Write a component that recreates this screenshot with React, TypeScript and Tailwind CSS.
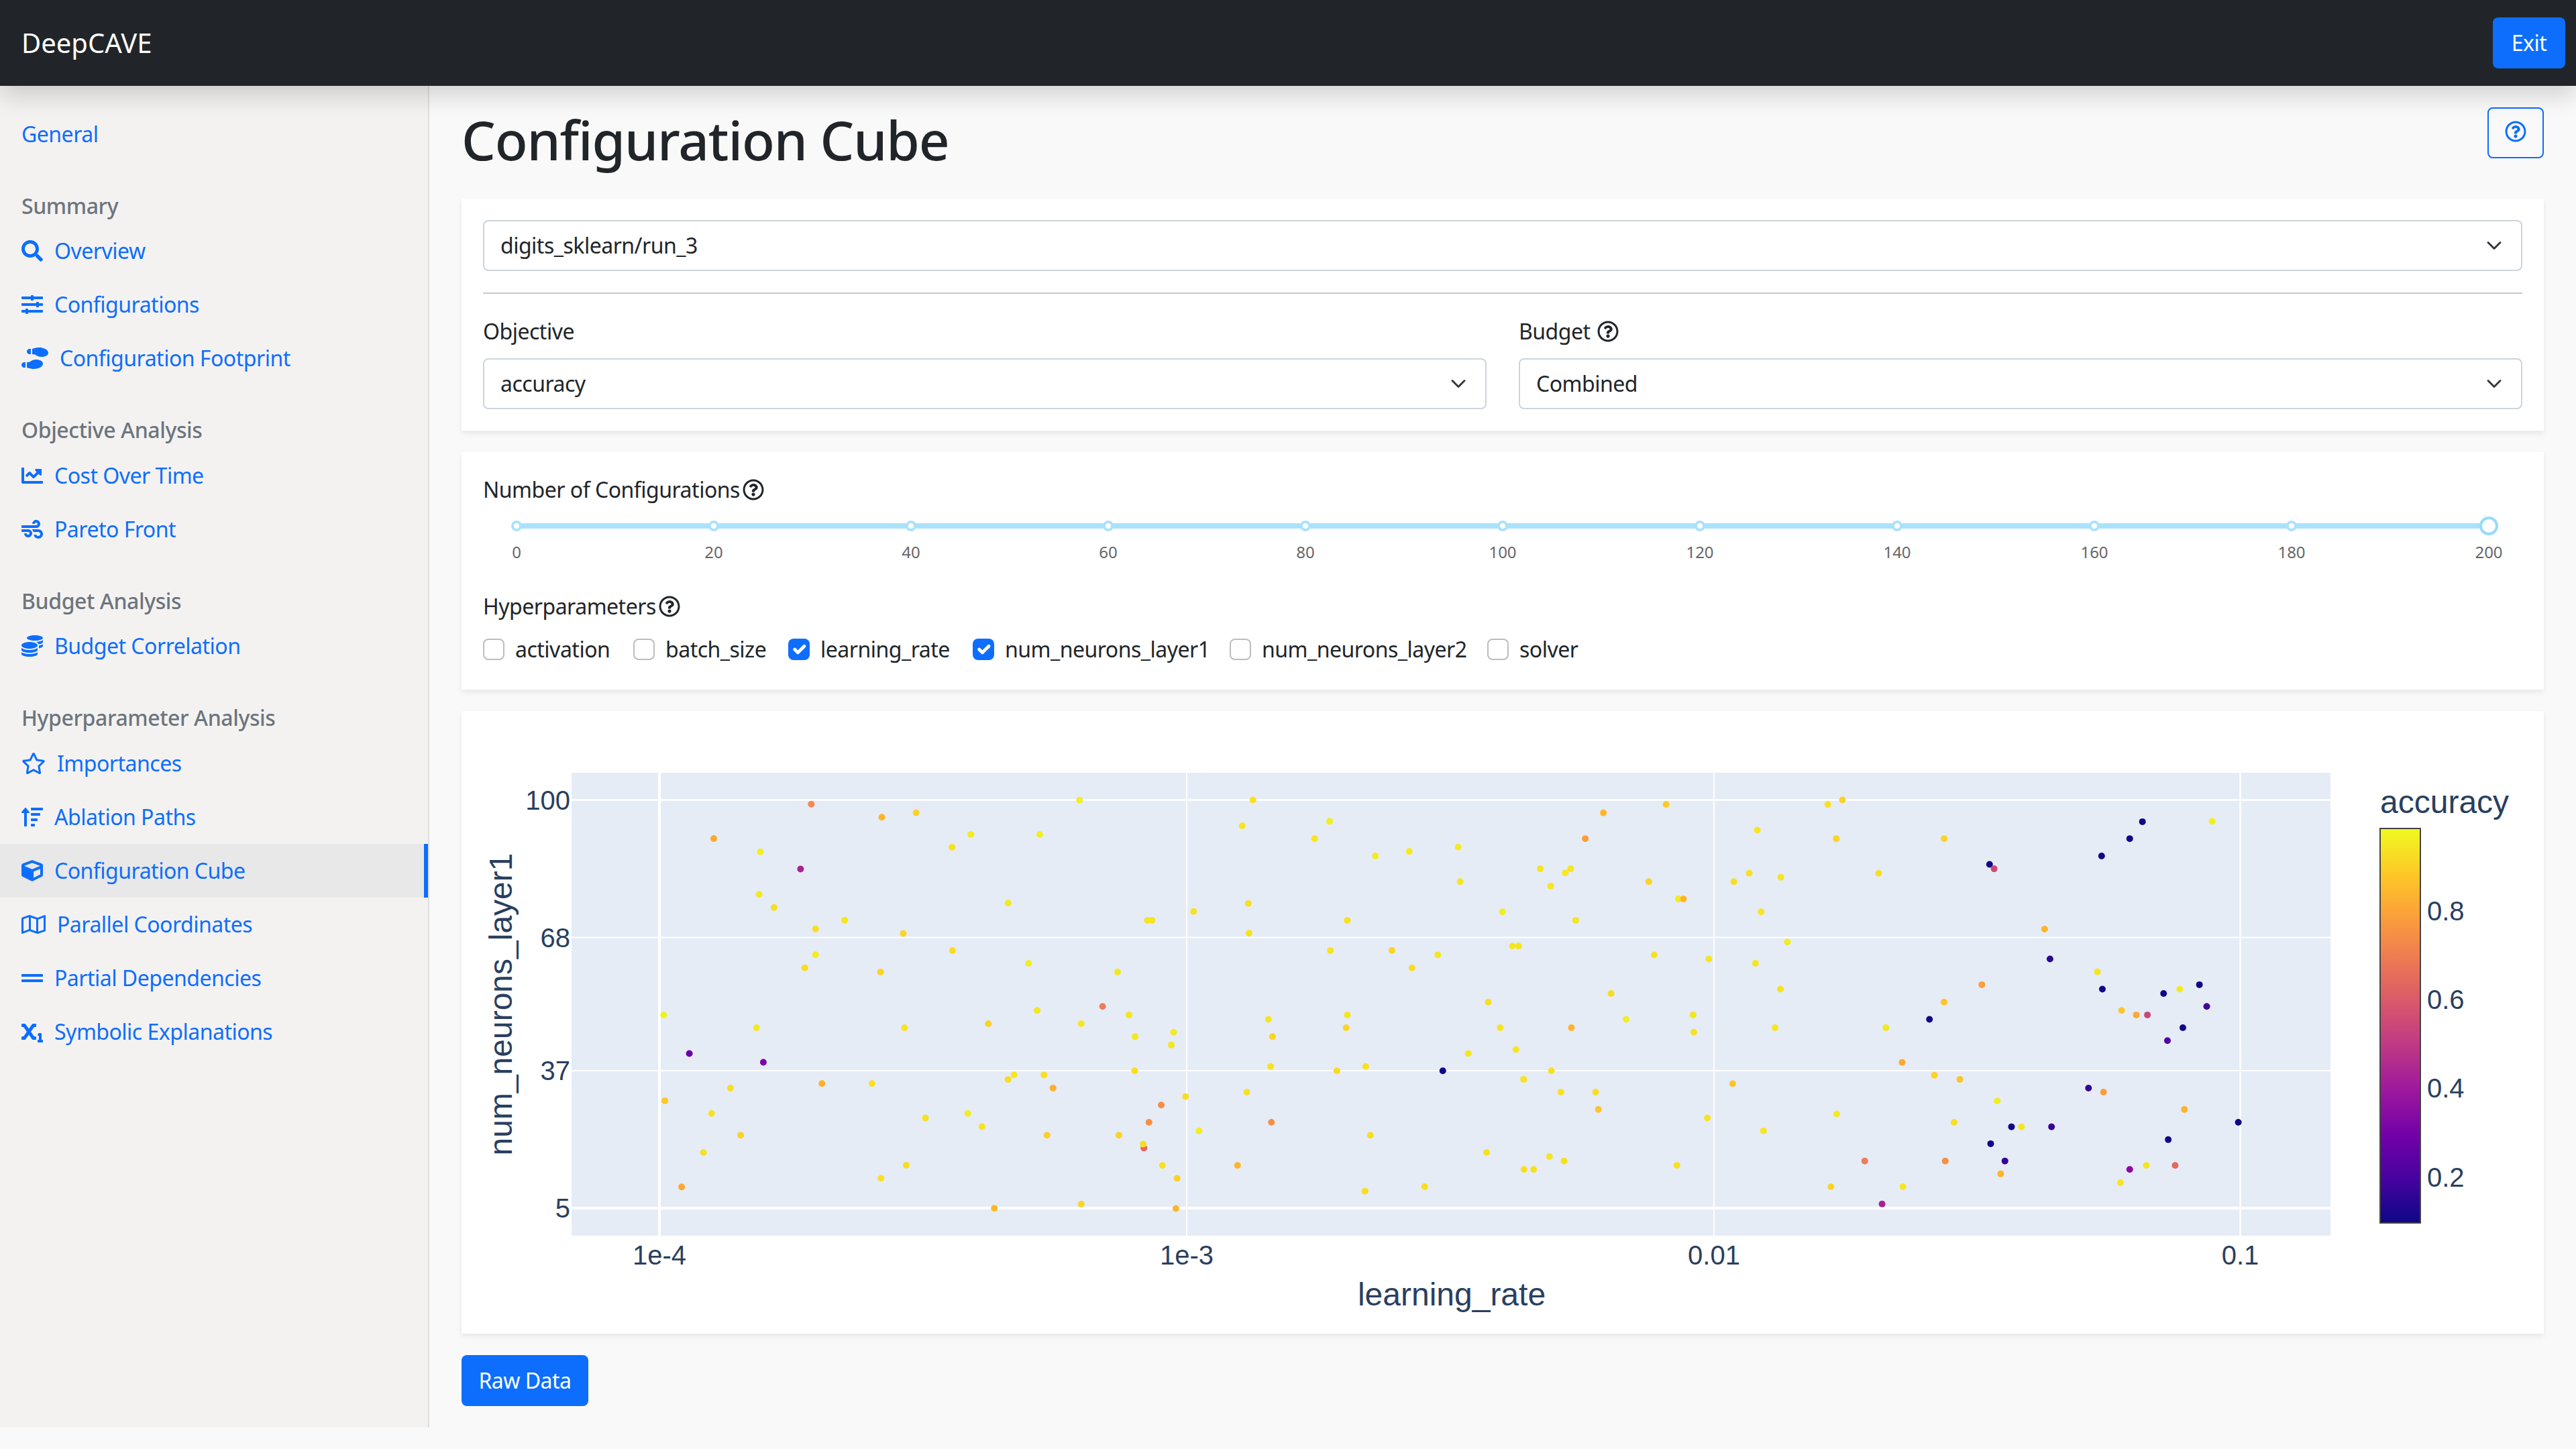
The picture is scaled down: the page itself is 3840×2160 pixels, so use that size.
import React from "react";
import {
  FaSearch, FaSlidersH, FaShoePrints, FaChartLine, FaWind, FaCoins, FaRegStar,
  FaSortAmountUp, FaCube, FaRegMap, FaGripLines, FaSubscript, FaRegQuestionCircle,
} from "react-icons/fa";

type IconT = React.ComponentType<{ className?: string }>;
type Item = { label: string; icon?: IconT; iconClass?: string };
const sections: { title?: string; items: (Item & { active?: boolean })[] }[] = [
  { items: [{ label: "General" }] },
  { title: "Summary", items: [
    { label: "Overview", icon: FaSearch, iconClass: "w-8" },
    { label: "Configurations", icon: FaSlidersH, iconClass: "w-8" },
    { label: "Configuration Footprint", icon: FaShoePrints, iconClass: "w-10" },
  ] },
  { title: "Objective Analysis", items: [
    { label: "Cost Over Time", icon: FaChartLine, iconClass: "w-8" },
    { label: "Pareto Front", icon: FaWind, iconClass: "w-8" },
  ] },
  { title: "Budget Analysis", items: [{ label: "Budget Correlation", icon: FaCoins, iconClass: "w-8" }] },
  { title: "Hyperparameter Analysis", items: [
    { label: "Importances", icon: FaRegStar, iconClass: "w-9" },
    { label: "Ablation Paths", icon: FaSortAmountUp, iconClass: "w-8" },
    { label: "Configuration Cube", icon: FaCube, iconClass: "w-8", active: true },
    { label: "Parallel Coordinates", icon: FaRegMap, iconClass: "w-9" },
    { label: "Partial Dependencies", icon: FaGripLines, iconClass: "w-8" },
    { label: "Symbolic Explanations", icon: FaSubscript, iconClass: "w-8" },
  ] },
];

type P = [number, number, string];
const z5: P[] = [
  [602,222,"#ffa92f"],[830,146,"#f58850"],[995,175,"#ffb428"],[1075,165,"#fcd225"],[1159,241,"#f7e220"],[1203,213,"#f5ea1f"],[1364,213,"#f2ee1f"],[1457,137,"#f2f01e"],[711,251,"#f0f01f"],[805,289,"#a8238f"],[708,345,"#f5e81f"],[743,374,"#f5e020"],[1290,364,"#f2ea1f"],[840,421,"#f9de20"],[908,402,"#f5e61f"],[1045,431,"#fad520"],[840,478,"#f0f01f"],[1160,469,"#f9dc20"],[815,507,"#f9dc20"],[1338,497,"#f2ee1f"],[992,516,"#fcd225"],[1546,516,"#f5e61f"],[1511,592,"#ee7c5a"],[1358,601,"#f5e61f"],[485,611,"#f0f21e"],[1244,630,"#fcd225"],[1461,630,"#f7e520"],[702,639,"#f2ea1f"],[1048,639,"#f7e520"],[545,696,"#6a00a8"],[718,715,"#7e03a8"],[1290,753,"#f9dc20"],[1304,743,"#f5e61f"],[1374,743,"#f9e020"],[1395,772,"#ffad2d"],[641,772,"#f9de20"],[855,762,"#ffaf2b"],[972,762,"#fce020"],[488,800,"#fdc927"],[597,828,"#f7e220"],[1097,838,"#f7e020"],[1196,828,"#f2ee1f"],[1229,857,"#f7e220"],[665,876,"#fcd225"],[1381,876,"#fdcf24"],[1549,876,"#fcd225"],[578,914,"#f9e020"],[527,990,"#ffa832"],[993,971,"#f9e020"],[1052,942,"#f9dc20"],[1258,1037,"#ffb726"],[1461,1028,"#fdd324"],
];
const z6: P[] = [
  [327,114,"#f9e020"],[299,184,"#f7e520"],[526,172,"#f0f01f"],[487,219,"#f7e520"],[645,266,"#f5ea1f"],[733,254,"#f5ea1f"],[860,242,"#f5ea1f"],[865,336,"#f7e520"],[1237,149,"#ffb726"],[1190,219,"#ff9e38"],[1400,126,"#fdc927"],[1073,301,"#f5e61f"],[1152,301,"#f7e520"],[1138,312,"#f5ea1f"],[1100,348,"#f7e520"],[1355,336,"#fcd225"],[1432,383,"#f5ea1f"],[1445,383,"#ffb726"],[173,417,"#f7e220"],[315,395,"#f9e020"],[53,441,"#f5e61f"],[65,441,"#f5e61f"],[572,441,"#f7e220"],[975,418,"#f2ee1f"],[1165,441,"#f5e61f"],[317,476,"#f7e220"],[528,523,"#f7e220"],[688,523,"#fad520"],[807,535,"#f5e61f"],[1001,511,"#f7e520"],[1017,511,"#f7e520"],[1369,535,"#f7e220"],[1511,546,"#f5e61f"],[740,570,"#f9dc20"],[1257,640,"#f9dc20"],[938,663,"#f9de20"],[1470,698,"#f5e61f"],[5,698,"#f5e61f"],[572,698,"#f7e520"],[367,710,"#f7e520"],[1296,710,"#f2ee1f"],[569,733,"#fdd324"],[969,733,"#f7e520"],[1154,733,"#ffb528"],[21,757,"#f5e61f"],[121,745,"#f5ea1f"],[378,757,"#fad520"],[1472,745,"#f7e220"],[115,780,"#f5e61f"],[1010,792,"#f7e520"],[886,803,"#f5e61f"],[373,838,"#f7e220"],[620,838,"#f7e220"],[20,850,"#f9de20"],[545,850,"#f9dc20"],[820,850,"#100788"],[1102,850,"#f7e220"],[1030,873,"#f9e020"],[311,908,"#f7e220"],[1127,908,"#f9e020"],[1217,908,"#f9de20"],[152,920,"#f9de20"],[1224,955,"#fdc527"],[89,943,"#f68f44"],[1507,978,"#f7e220"],[57,990,"#f68f44"],[375,990,"#f68f44"],[187,1013,"#f2ee1f"],[632,1025,"#f9de20"],[44,1060,"#e6685f"],[42,1049,"#f9de20"],[934,1072,"#f7e220"],[1097,1083,"#f5e61f"],[1135,1095,"#f9de20"],[1031,1118,"#f9de20"],[1056,1118,"#f9de20"],[92,1107,"#f9e020"],[287,1107,"#ffb528"],[1428,1107,"#f9e020"],[130,1142,"#fdcf24"],[618,1177,"#f9de20"],[773,1165,"#f9de20"],[127,1224,"#ffb528"],
];
const z7: P[] = [
  [252,126,"#f9e020"],[290,114,"#fcd225"],[69,196,"#f7e520"],[274,219,"#fcd225"],[554,219,"#fcd225"],[48,313,"#f9e020"],[8,336,"#f9de20"],[130,324,"#f7e520"],[384,313,"#f9de20"],[79,418,"#f5e61f"],[147,500,"#f5ea1f"],[64,558,"#f5e61f"],[129,628,"#f7e220"],[115,733,"#f5e61f"],[403,733,"#f5e61f"],[1250,172,"#f0f01f"],[1069,173,"#100788"],[1036,219,"#100788"],[963,266,"#100788"],[672,289,"#100788"],[684,301,"#cc4778"],[815,465,"#ffb528"],[829,546,"#2a0593"],[952,581,"#f5e61f"],[652,616,"#ff9e38"],[965,628,"#100788"],[1124,640,"#100788"],[1166,628,"#f5ea1f"],[1217,616,"#100788"],[554,663,"#fdc527"],[1015,686,"#fdc527"],[1053,698,"#ffa832"],[1082,698,"#cc4778"],[1236,675,"#41049d"],[516,710,"#100788"],[1174,733,"#100788"],[1134,768,"#5302a3"],[445,827,"#ffa832"],[529,862,"#fdd324"],[595,873,"#fdc527"],[5,885,"#fdc527"],[929,897,"#340597"],[968,908,"#ff9e38"],[692,932,"#f2ee1f"],[275,967,"#f5ea1f"],[1178,955,"#ffb528"],[580,990,"#f9e020"],[85,1013,"#f5e61f"],[729,1002,"#100788"],[755,1002,"#f5e61f"],[833,1002,"#340597"],[1318,990,"#100788"],[675,1048,"#100788"],[1136,1037,"#100788"],[348,1095,"#ee7c5a"],[557,1095,"#f68f44"],[712,1095,"#340597"],[1079,1107,"#f7e220"],[1036,1118,"#8b0aa5"],[1154,1107,"#e6685f"],[701,1130,"#ffb528"],[1012,1154,"#f5e61f"],[260,1165,"#fcd225"],[447,1165,"#f5e61f"],[393,1212,"#a8238f"],
];

const points: [number, number, string][] = [
  ...z5.map(([x, y, c]): [number, number, string] => [680 + x / 1.568, 1100 + y / 1.479, c]),
  ...z6.map(([x, y, c]): [number, number, string] => [1680 + x / 1.742, 1130 + y / 1.823, c]),
  ...z7.map(([x, y, c]): [number, number, string] => [2580 + x / 1.742, 1130 + y / 1.823, c]),
];

const hLines: [number, number, string][] = [[1192.5, 2.5, "100"], [1397.5, 2, "68"], [1596, 2, "37"], [1801, 4, "5"]];
const vLines: [number, number, string][] = [[983, 4, "1e-4"], [1769, 2, "1e-3"], [2555, 2, "0.01"], [3339.5, 2.5, "0.1"]];
const cbTicks: [number, string][] = [[1372, "0.8"], [1504, "0.6"], [1636, "0.4"], [1769, "0.2"]];

function Chart() {
  return (
    <svg viewBox="688 1060 3104 928" className="block h-full w-full" style={{ fontFamily: '"Liberation Sans", Arial, sans-serif', letterSpacing: 0 }}>
      <defs>
        <linearGradient id="plasma" x1="0" y1="1" x2="0" y2="0">
          {["#0d0887","#46039f","#7201a8","#9c179e","#bd3786","#d8576b","#ed7953","#fb9f3a","#fdca26","#f0f921"].map((c, i) => (
            <stop key={c} offset={i / 9} stopColor={c} />
          ))}
        </linearGradient>
      </defs>
      <rect x={852} y={1152} width={2622} height={690} fill="#e5ecf6" />
      {hLines.map(([y, w]) => <line key={y} x1={852} x2={3474} y1={y} y2={y} stroke="#fff" strokeWidth={w} />)}
      {vLines.map(([x, w]) => <line key={x} y1={1152} y2={1842} x1={x} x2={x} stroke="#fff" strokeWidth={w} />)}
      {points.map(([x, y, c], i) => <circle key={i} cx={x} cy={y} r={5} fill={c} />)}
      <g fill="#2a3f5f" fontSize={40}>
        {hLines.map(([y, , t]) => <text key={t} x={850} y={y + 14} textAnchor="end">{t}</text>)}
        {vLines.map(([x, , t]) => <text key={t} x={x} y={1885} textAnchor="middle">{t}</text>)}
        {cbTicks.map(([y, t]) => <text key={t} x={3618} y={y}>{t}</text>)}
      </g>
      <g fill="#2a3f5f" fontSize={48}>
        <text x={2164} y={1946} textAnchor="middle">learning_rate</text>
        <text transform="translate(763 1497) rotate(-90)" textAnchor="middle">num_neurons_layer1</text>
        <text x={3548} y={1212}>accuracy</text>
      </g>
      <rect x={3548} y={1235} width={60} height={588} fill="url(#plasma)" stroke="#444" strokeWidth={2} />
    </svg>
  );
}

function Select({ value }: { value: string }) {
  return (
    <div className="flex h-[76px] items-center justify-between rounded-lg border-2 border-[#ced4da] bg-white pl-6 pr-[28px]">
      <span>{value}</span>
      <svg viewBox="0 0 16 16" className="h-6 w-6" fill="none" stroke="#343a40" strokeWidth={2} strokeLinecap="round" strokeLinejoin="round">
        <path d="M2 5l6 6 6-6" />
      </svg>
    </div>
  );
}

function Check({ label, on, className }: { label: string; on?: boolean; className: string }) {
  return (
    <label className={"flex items-center gap-4 " + className}>
      <span className={on ? "flex h-8 w-8 items-center justify-center rounded-lg bg-[#0d6efd]" : "h-8 w-8 rounded-lg border-2 border-[#bdbdbd] bg-white"}>
        {on && (
          <svg viewBox="0 0 20 20" className="h-8 w-8" fill="none" stroke="#fff" strokeWidth={3} strokeLinecap="round" strokeLinejoin="round">
            <path d="M6 10l3 3l6-6" />
          </svg>
        )}
      </span>
      <span>{label}</span>
    </label>
  );
}

const marks = [0, 20, 40, 60, 80, 100, 120, 140, 160, 180, 200];

function Slider() {
  return (
    <div className="px-[50px]">
      <div className="relative h-7">
        <div className="absolute inset-x-0 top-[10px] h-2 bg-[#abe2fb]" />
        <div className="relative flex h-7 items-center justify-between">
          {marks.map((m) => (
            <div key={m} className="relative flex h-0 w-0 items-center justify-center">
              {m === 200 ? (
                <span className="block h-7 w-7 shrink-0 rounded-full border-4 border-[#96dbfa] bg-white" />
              ) : (
                <span className="block h-4 w-4 shrink-0 rounded-full border-4 border-[#abe2fb] bg-white" />
              )}
              <span className="absolute top-[25px] text-[24px] leading-[28px] tracking-normal text-[#666]">{m}</span>
            </div>
          ))}
        </div>
      </div>
    </div>
  );
}

export default function App() {
  return (
    <div className="flex h-[2160px] w-full flex-col bg-[#f9f9f9] font-['Noto_Sans',sans-serif] text-[32px] leading-[48px] tracking-[-0.5px] text-[#212529]">
      <header className="relative z-10 flex h-[128px] shrink-0 items-center justify-between bg-[#212529] pl-8 pr-4 shadow-[0_16px_32px_rgba(0,0,0,0.15)]">
        <span className="text-[40px] leading-[60px] tracking-normal text-white">DeepCAVE</span>
        <button className="h-[76px] w-[108px] rounded-lg bg-[#0d6efd] text-white">Exit</button>
      </header>
      <div className="flex min-h-0">
        <aside className="h-[2000px] w-[640px] shrink-0 border-r-2 border-[#dfdedd] bg-[#f4f2f1] pt-8">
          {sections.map((s, i) => (
            <div key={i}>
              {s.title && <div className="mb-2 mt-12 pl-8 text-[32px] font-medium leading-[38.4px] tracking-[-0.4px] text-[#6c757d]">{s.title}</div>}
              {s.items.map((it) => (
                <a key={it.label} className={"flex h-20 items-center pl-8 text-[#0d6efd] " + (it.active ? "border-r-[6px] border-[#0d6efd] bg-[#e8e8e8]" : "")}>
                  {it.icon && <it.icon className={"mr-[17px] h-8 shrink-0 " + it.iconClass} />}
                  <span>{it.label}</span>
                </a>
              ))}
            </div>
          ))}
        </aside>
        <main className="min-w-0 flex-1 px-12 pt-8">
          <div className="mb-10 flex h-24 items-start justify-between">
            <h1 className="text-[80px] font-medium leading-[96px] tracking-[-1.1px]">Configuration Cube</h1>
            <button className="flex h-[76px] w-[84px] items-center justify-center rounded-lg border-2 border-[#0d6efd] text-[#0d6efd]">
              <FaRegQuestionCircle className="-mt-1 h-8 w-8" />
            </button>
          </div>
          <section className="bg-white p-8 shadow-[0_4px_8px_rgba(0,0,0,0.075)]">
            <Select value="digits_sklearn/run_3" />
            <hr className="my-8 border-0 border-t-2 border-[#c8c9ca]" />
            <div className="grid grid-cols-2 gap-12">
              <div>
                <div className="mb-4">Objective</div>
                <Select value="accuracy" />
              </div>
              <div>
                <div className="mb-4 flex items-center">Budget<FaRegQuestionCircle className="ml-[10px] h-8 w-8" /></div>
                <Select value="Combined" />
              </div>
            </div>
          </section>
          <section className="mt-8 h-[354px] bg-white p-8 shadow-[0_4px_8px_rgba(0,0,0,0.075)]">
            <div className="flex items-center">Number of Configurations<FaRegQuestionCircle className="ml-1 h-8 w-8" /></div>
            <div className="mt-4"><Slider /></div>
            <div className="mt-[82px] flex items-center">Hyperparameters<FaRegQuestionCircle className="ml-1 h-8 w-8" /></div>
            <div className="mt-4 flex items-center">
              <Check label="activation" className="w-[224px]" />
              <Check label="batch_size" className="w-[231px]" />
              <Check label="learning_rate" className="w-[275px]" on />
              <Check label="num_neurons_layer1" className="w-[383px]" on />
              <Check label="num_neurons_layer2" className="w-[384px]" />
              <Check label="solver" className="" />
            </div>
          </section>
          <section className="mt-8 h-[928px] bg-white shadow-[0_4px_8px_rgba(0,0,0,0.075)]">
            <Chart />
          </section>
          <button className="mt-8 h-[76px] w-[189px] rounded-lg bg-[#0d6efd] text-white">Raw Data</button>
        </main>
      </div>
    </div>
  );
}
